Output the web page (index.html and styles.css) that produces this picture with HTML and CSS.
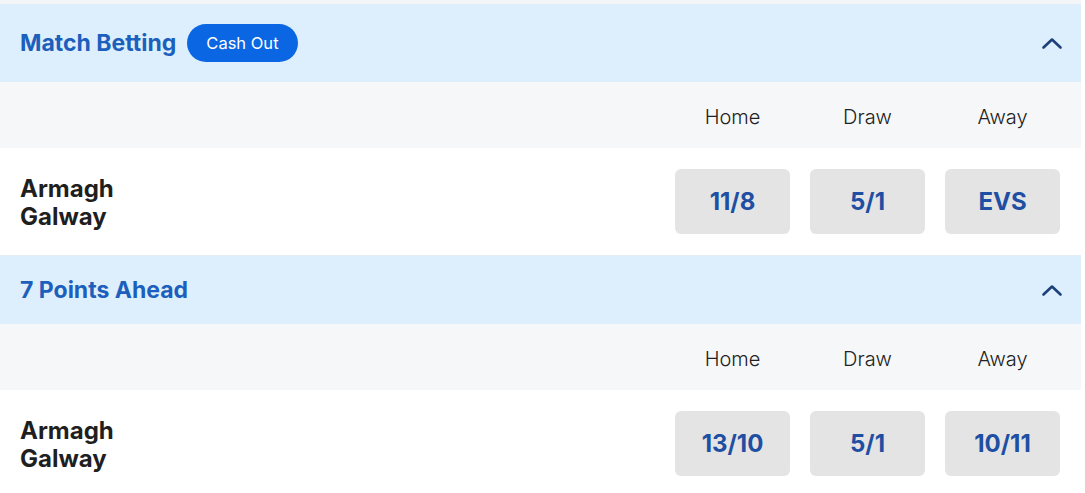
FILE: index.html
```html
<!DOCTYPE html>
<html>
<head>
<meta charset="utf-8">
<link rel="stylesheet" href="styles.css">
</head>
<body>
<div class="page">
  <section class="market">
    <div class="market-head">
      <div class="title-wrap">
        <span class="title">Match Betting</span>
        <span class="pill">Cash Out</span>
      </div>
      <svg class="chev" width="22" height="14" viewBox="0 0 22 14"><path d="M2.5 11.5 L11 3.5 L19.5 11.5" fill="none" stroke="#1d3f7a" stroke-width="2.6" stroke-linecap="round" stroke-linejoin="round"/></svg>
    </div>
    <div class="cols">
      <span class="col">Home</span><span class="col">Draw</span><span class="col">Away</span>
    </div>
    <div class="row">
      <div class="teams"><div>Armagh</div><div>Galway</div></div>
      <div class="odds"><span class="odd">11/8</span><span class="odd">5/1</span><span class="odd">EVS</span></div>
    </div>
  </section>
  <section class="market">
    <div class="market-head next">
      <div class="title-wrap">
        <span class="title">7 Points Ahead</span>
      </div>
      <svg class="chev" width="22" height="14" viewBox="0 0 22 14"><path d="M2.5 11.5 L11 3.5 L19.5 11.5" fill="none" stroke="#1d3f7a" stroke-width="2.6" stroke-linecap="round" stroke-linejoin="round"/></svg>
    </div>
    <div class="cols">
      <span class="col">Home</span><span class="col">Draw</span><span class="col">Away</span>
    </div>
    <div class="row">
      <div class="teams"><div>Armagh</div><div>Galway</div></div>
      <div class="odds"><span class="odd">13/10</span><span class="odd">5/1</span><span class="odd">10/11</span></div>
    </div>
  </section>
</div>
</body>
</html>
```
FILE: styles.css
```css
html, body {
  margin: 0;
  padding: 0;
  background: #ffffff;
  font-family: Inter, "Noto Sans", sans-serif;
}
.page {
  width: 1081px;
  border-top: 4px solid #f4f5f7;
}
.market-head {
  display: flex;
  align-items: center;
  justify-content: space-between;
  background: #ddeffc;
  padding: 20px 18px 20px 20px;
  min-height: 28px;
}
.market-head.next {
  border-top: 1px solid #e6eef5;
}
.title-wrap {
  display: flex;
  align-items: center;
  gap: 11px;
}
.title {
  font-size: 23px;
  font-weight: 700;
  color: #1d5fbd;
  line-height: 28px;
}
.pill {
  background: #0a66e2;
  color: #ffffff;
  font-size: 16.5px;
  font-weight: 400;
  height: 38px;
  line-height: 38px;
  padding: 0 19px;
  border-radius: 19px;
}
.chev {
  display: block;
}
.cols {
  display: flex;
  justify-content: flex-end;
  gap: 20px;
  background: #f6f7f9;
  height: 66px;
  box-sizing: border-box;
  padding-top: 3px;
  align-items: center;
  padding-right: 21px;
}
.col {
  width: 115px;
  text-align: center;
  font-size: 20px;
  font-weight: 300;
  color: #222222;
}
.row {
  display: flex;
  align-items: center;
  justify-content: space-between;
  padding: 21px 21px 21px 20px;
}
.teams {
  font-size: 24px;
  font-weight: 700;
  color: #1f1f1f;
  line-height: 28px;
  padding-top: 2px;
}
.odds {
  display: flex;
  gap: 20px;
}
.odd {
  width: 115px;
  height: 65px;
  border-radius: 6px;
  background: #e4e4e4;
  display: flex;
  align-items: center;
  justify-content: center;
  font-size: 24px;
  font-weight: 700;
  color: #1e4fa3;
}
```
